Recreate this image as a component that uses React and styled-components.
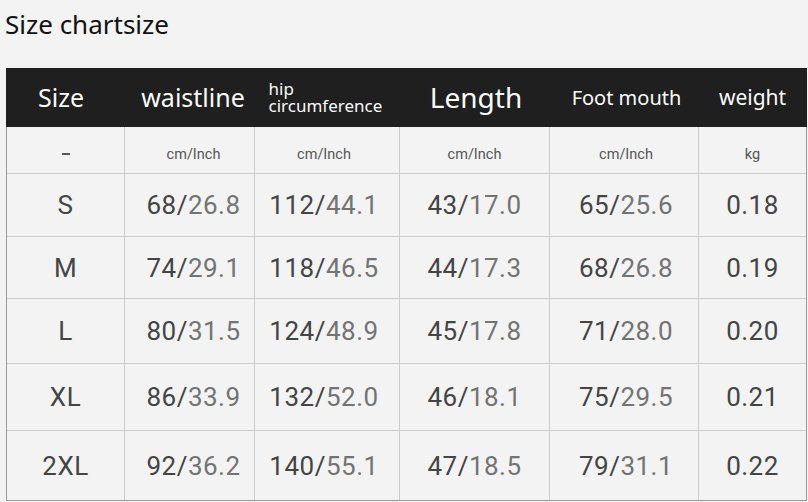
import React from 'react';
import styled, { createGlobalStyle } from 'styled-components';

const GlobalStyle = createGlobalStyle`
  html, body {
    margin: 0;
    padding: 0;
    background: #f3f3f3;
  }
  body {
    font-family: "Noto Sans", Arial, sans-serif;
  }
`;

const columns = '118px 130px 145px 150px 149px 107px';

const headers = [
  { label: 'Size', size: 25, shift: -5 },
  { label: 'waistline', size: 25, shift: 3 },
  { label: 'hip circumference', size: 17, shift: 0, wrap: true },
  { label: 'Length', size: 28, shift: 1 },
  { label: 'Foot mouth', size: 20, shift: 2 },
  { label: 'weight', size: 21, shift: 0 },
];

// small nudges so body text lines up like the source image
const shifts = [0, 4, -3, 0, 2, 0];

const units = ['-', 'cm/Inch', 'cm/Inch', 'cm/Inch', 'cm/Inch', 'kg'];

const rows = [
  { size: 'S', h: 63, vals: ['68/26.8', '112/44.1', '43/17.0', '65/25.6'], kg: '0.18' },
  { size: 'M', h: 62, vals: ['74/29.1', '118/46.5', '44/17.3', '68/26.8'], kg: '0.19' },
  { size: 'L', h: 65, vals: ['80/31.5', '124/48.9', '45/17.8', '71/28.0'], kg: '0.20' },
  { size: 'XL', h: 67, vals: ['86/33.9', '132/52.0', '46/18.1', '75/29.5'], kg: '0.21' },
  { size: '2XL', h: 69, vals: ['92/36.2', '140/55.1', '47/18.5', '79/31.1'], kg: '0.22' },
];

const Page = styled.div`
  padding: 0 0 0 6px;
`;

const Title = styled.h1`
  margin: 0 0 20px -1px;
  height: 48px;
  line-height: 48px;
  font-family: "Noto Sans", sans-serif;
  font-weight: 400;
  font-size: 26px;
  color: #111;
`;

const Table = styled.div`
  width: 801px;
  box-sizing: border-box;
  border: 1px solid #9a9a9a;
  border-top: none;
`;

const HeaderRow = styled.div`
  display: grid;
  grid-template-columns: ${columns};
  height: 59px;
  background: #1f1f1f;
  margin: 0 -1px;
  padding: 0 1px;
`;

const HeaderCell = styled.div`
  display: flex;
  align-items: center;
  justify-content: center;
  padding-left: ${p => Math.max(p.shift, 0) * 2}px;
  padding-right: ${p => Math.max(-p.shift, 0) * 2}px;
  color: #fafafa;
  font-size: ${p => p.size}px;
  line-height: 1.1;
  white-space: nowrap;
`;

const Wrapped = styled.span`
  width: 118px;
  white-space: normal;
  text-align: left;
  line-height: 17px;
  margin-top: -2px;
`;

const Row = styled.div`
  display: grid;
  grid-template-columns: ${columns};
  height: ${p => p.h}px;
  box-sizing: border-box;
  border-bottom: ${p => (p.last ? 'none' : '1px solid #cdcdcd')};
`;

const Cell = styled.div`
  display: flex;
  align-items: center;
  justify-content: center;
  padding-left: ${p => Math.max(p.shift, 0) * 2}px;
  padding-right: ${p => Math.max(-p.shift, 0) * 2}px;
  border-right: 1px solid #cdcdcd;
  font-family: Roboto, "DejaVu Sans", sans-serif;
  font-size: 26px;
  letter-spacing: 0.5px;
  color: #444;
  &:last-child {
    border-right: none;
  }
`;

const UnitCell = styled(Cell)`
  font-size: 14.5px;
  letter-spacing: 0;
  color: #555;
  padding-top: 8px;
`;

const Dash = styled.span`
  display: inline-block;
  width: 8px;
  height: 2px;
  background: #555;
`;

const Inch = styled.span`
  color: #737373;
`;

function Value({ text }) {
  const [cm, inch] = text.split('/');
  return (
    <span>
      {cm}/<Inch>{inch}</Inch>
    </span>
  );
}

export default function App() {
  return (
    <Page>
      <GlobalStyle />
      <Title>Size chartsize</Title>
      <Table>
        <HeaderRow>
          {headers.map(h => (
            <HeaderCell key={h.label} size={h.size} shift={h.shift}>
              {h.wrap ? <Wrapped>{h.label}</Wrapped> : h.label}
            </HeaderCell>
          ))}
        </HeaderRow>
        <Row h={47}>
          {units.map((u, i) => (
            <UnitCell key={i} shift={shifts[i]}>{u === '-' ? <Dash /> : u}</UnitCell>
          ))}
        </Row>
        {rows.map((r, idx) => (
          <Row key={r.size} h={r.h} last={idx === rows.length - 1}>
            <Cell shift={shifts[0]}>{r.size}</Cell>
            {r.vals.map((v, i) => (
              <Cell key={v} shift={shifts[i + 1]}><Value text={v} /></Cell>
            ))}
            <Cell shift={shifts[5]}>{r.kg}</Cell>
          </Row>
        ))}
      </Table>
    </Page>
  );
}
